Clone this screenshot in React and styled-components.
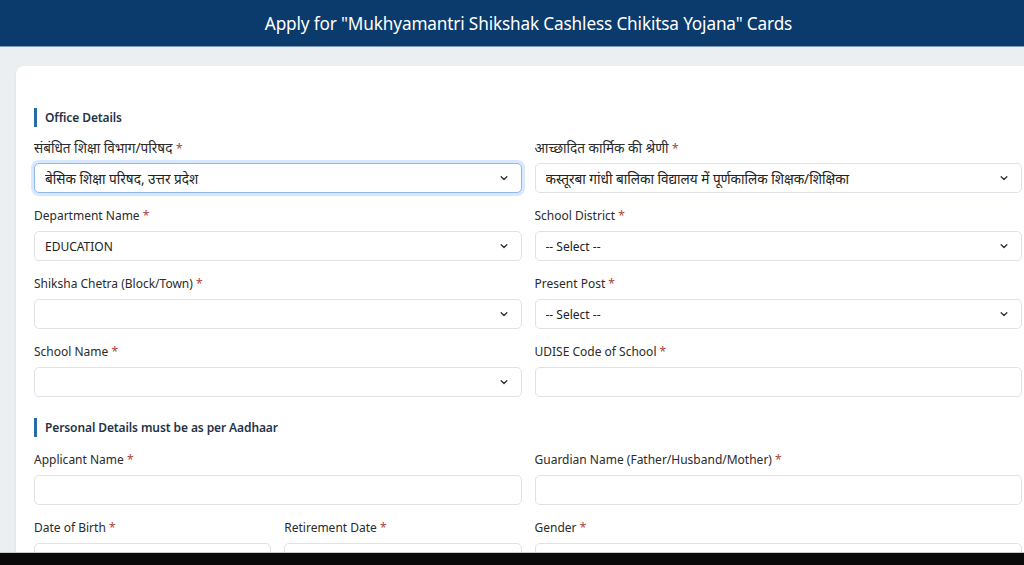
import React from "react";
import styled, { createGlobalStyle } from "styled-components";

const Global = createGlobalStyle`
  html, body { margin: 0; padding: 0; height: 100%; overflow: hidden; }
  body { font-family: "Noto Sans", "Open Sans", sans-serif; background: #eceff2; }
  #root { height: 100%; }
`;

const Page = styled.div`
  height: 565px;
  display: flex;
  flex-direction: column;
  overflow: hidden;
`;

const Header = styled.header`
  height: 47px;
  box-sizing: border-box;
  flex: none;
  background: #0b3b6c;
  border-bottom: 1px solid #7d9bb8;
  display: flex;
  align-items: center;
  justify-content: center;
  padding-left: 33px;
  color: #fff;
  font-size: 17.2px;
  letter-spacing: -0.15px;
`;

const Main = styled.main`
  flex: 1;
  min-height: 0;
  overflow: hidden;
  padding: 19px 0 0 16px;
`;

const Card = styled.section`
  width: 1024px;
  background: #fff;
  border-radius: 8px;
  box-shadow: 0 1px 3px rgba(0, 0, 0, 0.08);
  padding: 42px 18px 0 18px;
  box-sizing: border-box;
  min-height: 600px;
`;

const SectionTitle = styled.h2`
  margin: 0 0 ${(p) => p.$mb || 12}px 0;
  font-size: 12px;
  font-weight: 600;
  letter-spacing: -0.1px;
  color: #1f3347;
  border-left: 3px solid #2a6aa8;
  padding-left: 8px;
  line-height: 19px;
`;

const Grid = styled.div`
  display: grid;
  grid-template-columns: ${(p) => p.$cols || "1fr 1fr"};
  column-gap: 13px;
  row-gap: 14px;
  margin-bottom: ${(p) => p.$mb || 0}px;
`;

const Field = styled.div`
  display: flex;
  flex-direction: column;
  gap: 7px;
  grid-column: ${(p) => p.$span || "auto"};
`;

const Label = styled.label`
  font-size: ${(p) => (p.$hi ? "13.6px" : "12px")};
  color: #2b2b2b;
  line-height: 17px;
  height: 17px;
  white-space: nowrap;
`;

const Star = styled.span`
  color: #a8453c;
  font-size: 12px;
`;

const Box = styled.div`
  height: 30px;
  box-sizing: border-box;
  border: 1px solid ${(p) => (p.$focus ? "#8fb9ee" : "#dfe2e6")};
  box-shadow: ${(p) => (p.$focus ? "0 0 0 3px rgba(13,110,253,0.16)" : "none")};
  border-radius: 5px;
  background: #fff;
  display: flex;
  align-items: center;
  padding: 0 12px 0 10px;
  font-size: ${(p) => (p.$hi ? "13.6px" : "12px")};
  color: #222;
`;

const Value = styled.span`
  flex: 1;
  white-space: nowrap;
  overflow: hidden;
`;

const Chevron = () => (
  <svg width="10" height="10" viewBox="0 0 16 16" fill="none" stroke="#333" strokeWidth="2.2" strokeLinecap="round" strokeLinejoin="round">
    <path d="M3.5 6l4.5 4.5L12.5 6" />
  </svg>
);

const BottomBar = styled.div`
  height: 12px;
  flex: none;
  background: #0a0a0a;
  border-top: 1px solid #c9cbcd;
`;

const F = ({ label, value, select, focus, span, hiLabel, hiValue }) => (
  <Field $span={span}>
    <Label $hi={hiLabel}>
      {label} <Star>*</Star>
    </Label>
    <Box $focus={focus} $hi={hiValue}>
      <Value>{value}</Value>
      {select && <Chevron />}
    </Box>
  </Field>
);

export default function App() {
  return (
    <>
      <Global />
      <Page>
        <Header>Apply for "Mukhyamantri Shikshak Cashless Chikitsa Yojana" Cards</Header>
        <Main>
          <Card>
            <SectionTitle>Office Details</SectionTitle>
            <Grid $mb={21}>
              <F label="संबंधित शिक्षा विभाग/परिषद" value="बेसिक शिक्षा परिषद, उत्तर प्रदेश" select focus hiLabel hiValue />
              <F label="आच्छादित कार्मिक की श्रेणी" value="कस्तूरबा गांधी बालिका विद्यालय में पूर्णकालिक शिक्षक/शिक्षिका" select hiLabel hiValue />
              <F label="Department Name" value="EDUCATION" select />
              <F label="School District" value="-- Select --" select />
              <F label="Shiksha Chetra (Block/Town)" value="" select />
              <F label="Present Post" value="-- Select --" select />
              <F label="School Name" value="" select />
              <F label="UDISE Code of School" value="" />
            </Grid>
            <SectionTitle $mb={14}>Personal Details must be as per Aadhaar</SectionTitle>
            <Grid $cols="1fr 1fr 1fr 1fr">
              <F label="Applicant Name" value="" span="span 2" />
              <F label="Guardian Name (Father/Husband/Mother)" value="" span="span 2" />
              <F label="Date of Birth" value="" />
              <F label="Retirement Date" value="" />
              <F label="Gender" value="" span="span 2" />
            </Grid>
          </Card>
        </Main>
        <BottomBar />
      </Page>
    </>
  );
}
